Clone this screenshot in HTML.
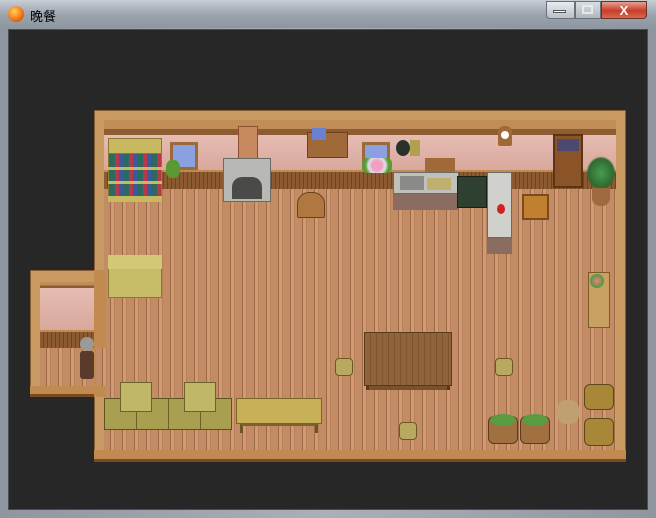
<!DOCTYPE html>
<html><head><meta charset="utf-8"><style>
*{margin:0;padding:0;box-sizing:border-box}
body{width:656px;height:518px;overflow:hidden;background:#8a9098;font-family:"Liberation Sans","Noto Sans CJK SC",sans-serif;position:relative}
div{position:absolute}
.tb{left:0;top:0;width:656px;height:30px;background:linear-gradient(#c8ced6,#9aa2ac 50%,#8c949e)}
.frame{left:0;top:28px;width:656px;height:490px;background:linear-gradient(90deg,#8f969f,#aab0b8 50%,#8f969f)}
.game{left:8px;top:29px;width:640px;height:481px;background:#272727;border:1px solid #4a4e54}
.floor{background:repeating-linear-gradient(90deg,#c48c64 0 6px,#9c6a46 6px 7px,#d09a74 7px 10px,#b88058 10px 11px,#c48c64 11px 12px)}
.fr{background:#c99a62}
.beam{background:linear-gradient(#c08c58 0 60%,#8e5c32 60%)}
.pink{background:linear-gradient(#e6bcb2,#d8a89c)}
.wain{background:repeating-linear-gradient(90deg,#8c5a30 0 3px,#6e4422 3px 4px);border-top:2px solid #c08a50}
.yel{background:#c8b860;border:1px solid #8a7a30}
.gray{background:#b8b8b4;border:1px solid #6a6a66}
</style></head><body>
<div class="tb"></div>
<div style="left:8px;top:6px;width:16px;height:16px;border-radius:50%;background:radial-gradient(circle at 40% 35%,#ffd060,#f07010 60%,#b03000)"></div>
<div style="left:30px;top:6px;font-size:13px;color:#000">晚餐</div>
<div style="left:546px;top:1px;width:29px;height:18px;background:linear-gradient(#e8ecf0,#b8c0c8);border:1px solid #6a7078;border-radius:0 0 0 4px"></div>
<div style="left:553px;top:10px;width:13px;height:3px;background:#fff;border:1px solid #555"></div>
<div style="left:575px;top:1px;width:26px;height:18px;background:linear-gradient(#d8dde2,#aeb6be);border:1px solid #6a7078"></div>
<div style="left:582px;top:5px;width:11px;height:9px;border:2px solid #e8e8e8"></div>
<div style="left:601px;top:1px;width:46px;height:18px;background:linear-gradient(#e8a090,#c83c28 55%,#d86a50);border:1px solid #6a3028;border-radius:0 0 4px 0;color:#fff;font-weight:bold;font-size:13px;text-align:center;line-height:17px">X</div>
<div class="frame"></div>
<div class="game"></div>

<div class="fr" style="left:30px;top:270px;width:76px;height:127px;border:1px solid #8a5a30"></div>
<div class="beam" style="left:40px;top:282px;width:62px;height:6px"></div>
<div class="pink" style="left:40px;top:288px;width:62px;height:42px"></div>
<div class="wain" style="left:40px;top:330px;width:62px;height:18px"></div>
<div class="floor" style="left:40px;top:348px;width:64px;height:38px"></div>
<div style="left:30px;top:386px;width:76px;height:11px;background:#c08a50;border-bottom:3px solid #7a4a20"></div>

<div class="fr" style="left:94px;top:110px;width:532px;height:352px;border:1px solid #8a5a30"></div>
<div class="beam" style="left:104px;top:120px;width:512px;height:15px"></div>
<div class="pink" style="left:104px;top:135px;width:512px;height:36px"></div>
<div class="wain" style="left:104px;top:170px;width:512px;height:19px"></div>
<div class="floor" style="left:104px;top:189px;width:512px;height:261px"></div>
<div style="left:94px;top:450px;width:532px;height:12px;background:#c08a50;border-bottom:3px solid #7a4a20"></div>
<div class="fr" style="left:94px;top:270px;width:12px;height:127px;background:#c08a50"></div>
<div class="floor" style="left:96px;top:348px;width:12px;height:38px"></div>

<div class="yel" style="left:108px;top:138px;width:54px;height:64px;background:repeating-linear-gradient(90deg,#2a6a60 0 6px,#b83848 6px 10px,#3a5aa0 10px 14px),#c8b860"></div>
<div style="left:108px;top:167px;width:54px;height:3px;background:#c8b860"></div>
<div style="left:108px;top:181px;width:54px;height:3px;background:#c8b860"></div>
<div class="yel" style="left:108px;top:138px;width:54px;height:16px"></div>
<div style="left:108px;top:196px;width:54px;height:6px;background:#c8b860"></div>
<div style="left:170px;top:142px;width:28px;height:28px;background:#8aa0e0;border:3px solid #9a6a38"></div>
<div style="left:166px;top:160px;width:14px;height:18px;background:#5a9a30;border-radius:40%"></div>
<div style="left:238px;top:126px;width:20px;height:44px;background:#c88860;border:1px solid #8a5030"></div>
<div class="gray" style="left:223px;top:158px;width:48px;height:44px"></div>
<div style="left:232px;top:177px;width:30px;height:22px;background:#4a4a48;border-radius:10px 10px 0 0"></div>
<div style="left:297px;top:192px;width:28px;height:26px;background:#b07840;border-radius:12px 12px 2px 2px;border:1px solid #6a4020"></div>
<div style="left:307px;top:132px;width:41px;height:26px;background:#a06a38;border:1px solid #6a4020"></div>
<div style="left:312px;top:128px;width:14px;height:12px;background:#6a80d0"></div>
<div style="left:362px;top:142px;width:28px;height:28px;background:#8aa0e0;border:3px solid #9a6a38"></div>
<div style="left:362px;top:158px;width:30px;height:15px;background:radial-gradient(circle,#f0a0c0 30%,#e0e0f0 50%,#5a9a30 70%);border-radius:5px"></div>

<div style="left:396px;top:140px;width:14px;height:16px;background:#2a302a;border-radius:50%"></div>
<div style="left:410px;top:140px;width:10px;height:16px;background:#b0a050"></div>
<div style="left:425px;top:158px;width:30px;height:18px;background:#a06a38"></div>
<div class="gray" style="left:393px;top:172px;width:66px;height:22px;background:#c0c0bc"></div>
<div style="left:400px;top:176px;width:24px;height:14px;background:#8a8a88"></div>
<div style="left:427px;top:178px;width:24px;height:12px;background:#c0b070"></div>
<div style="left:393px;top:194px;width:66px;height:16px;background:#8a6c60"></div>
<div style="left:457px;top:176px;width:30px;height:32px;background:#2e4030;border:1px solid #1a201a"></div>
<div class="gray" style="left:487px;top:172px;width:25px;height:66px;background:#d0d0cc"></div>
<div style="left:487px;top:238px;width:25px;height:16px;background:#8a6c60"></div>
<div style="left:497px;top:204px;width:8px;height:10px;background:#d02020;border-radius:50%"></div>
<div style="left:498px;top:126px;width:14px;height:20px;background:#a06a38;border-radius:6px 6px 2px 2px"></div>
<div style="left:501px;top:131px;width:8px;height:8px;background:#fff;border-radius:50%"></div>
<div style="left:553px;top:134px;width:30px;height:54px;background:#8a5428;border:2px solid #5a3414"></div>
<div style="left:557px;top:139px;width:22px;height:12px;background:#4a4a70"></div>
<div style="left:586px;top:156px;width:30px;height:34px;background:radial-gradient(#4a9a50,#2e6a30 60%,transparent 70%)"></div>
<div style="left:592px;top:188px;width:18px;height:18px;background:#a06a40;border-radius:0 0 8px 8px"></div>
<div style="left:522px;top:194px;width:27px;height:26px;background:#c08030;border:2px solid #7a4a20"></div>

<div class="yel" style="left:108px;top:255px;width:54px;height:43px;background:#c8bc68"></div>
<div style="left:108px;top:255px;width:54px;height:14px;background:#d4c878"></div>
<div style="left:588px;top:272px;width:22px;height:56px;background:#c8a060;border:1px solid #7a5a2a"></div>
<div style="left:590px;top:274px;width:14px;height:14px;background:radial-gradient(#f08080,#4a9a40 70%);border-radius:50%"></div>
<div style="left:364px;top:332px;width:88px;height:54px;background:repeating-linear-gradient(90deg,#8e6438 0 5px,#7c5430 5px 6px);border:1px solid #5a3a1a"></div>
<div style="left:366px;top:386px;width:84px;height:4px;border-left:3px solid #5a3a1a;border-right:3px solid #5a3a1a;background:#7a5030"></div>
<div style="left:335px;top:358px;width:18px;height:18px;background:#b8a860;border-radius:4px;border:1px solid #6a5a20"></div>
<div style="left:495px;top:358px;width:18px;height:18px;background:#b8a860;border-radius:4px;border:1px solid #6a5a20"></div>
<div style="left:399px;top:422px;width:18px;height:18px;background:#b8a860;border-radius:4px;border:1px solid #6a5a20"></div>

<div style="left:80px;top:337px;width:14px;height:14px;background:#9a9a98;border-radius:50%"></div>
<div style="left:80px;top:351px;width:14px;height:28px;background:#5a3a2a;border-radius:3px"></div>

<div style="left:104px;top:398px;width:128px;height:32px;background:repeating-linear-gradient(90deg,#a8a050 0 31px,#6a6428 31px 32px);border:1px solid #5a5420"></div>
<div style="left:120px;top:382px;width:32px;height:30px;background:#c0b868;border:1px solid #6a6428"></div>
<div style="left:184px;top:382px;width:32px;height:30px;background:#c0b868;border:1px solid #6a6428"></div>
<div style="left:236px;top:398px;width:86px;height:26px;background:#c8b058;border:1px solid #7a6428"></div>
<div style="left:240px;top:424px;width:78px;height:9px;border-left:3px solid #6a5428;border-right:3px solid #6a5428;border-top:2px solid #7a6428"></div>

<div style="left:488px;top:416px;width:30px;height:28px;background:#a07040;border-radius:6px;border:1px solid #5a3a1a"></div>
<div style="left:520px;top:416px;width:30px;height:28px;background:#a07040;border-radius:6px;border:1px solid #5a3a1a"></div>
<div style="left:490px;top:414px;width:26px;height:12px;background:#5a9a40;border-radius:50%"></div>
<div style="left:522px;top:414px;width:26px;height:12px;background:#5a9a40;border-radius:50%"></div>
<div style="left:557px;top:400px;width:22px;height:24px;background:#c0a070;border-radius:40%"></div>
<div style="left:584px;top:384px;width:30px;height:26px;background:#a88838;border-radius:6px;border:1px solid #5a4a1a"></div>
<div style="left:584px;top:418px;width:30px;height:28px;background:#a88838;border-radius:6px;border:1px solid #5a4a1a"></div>
</body></html>
